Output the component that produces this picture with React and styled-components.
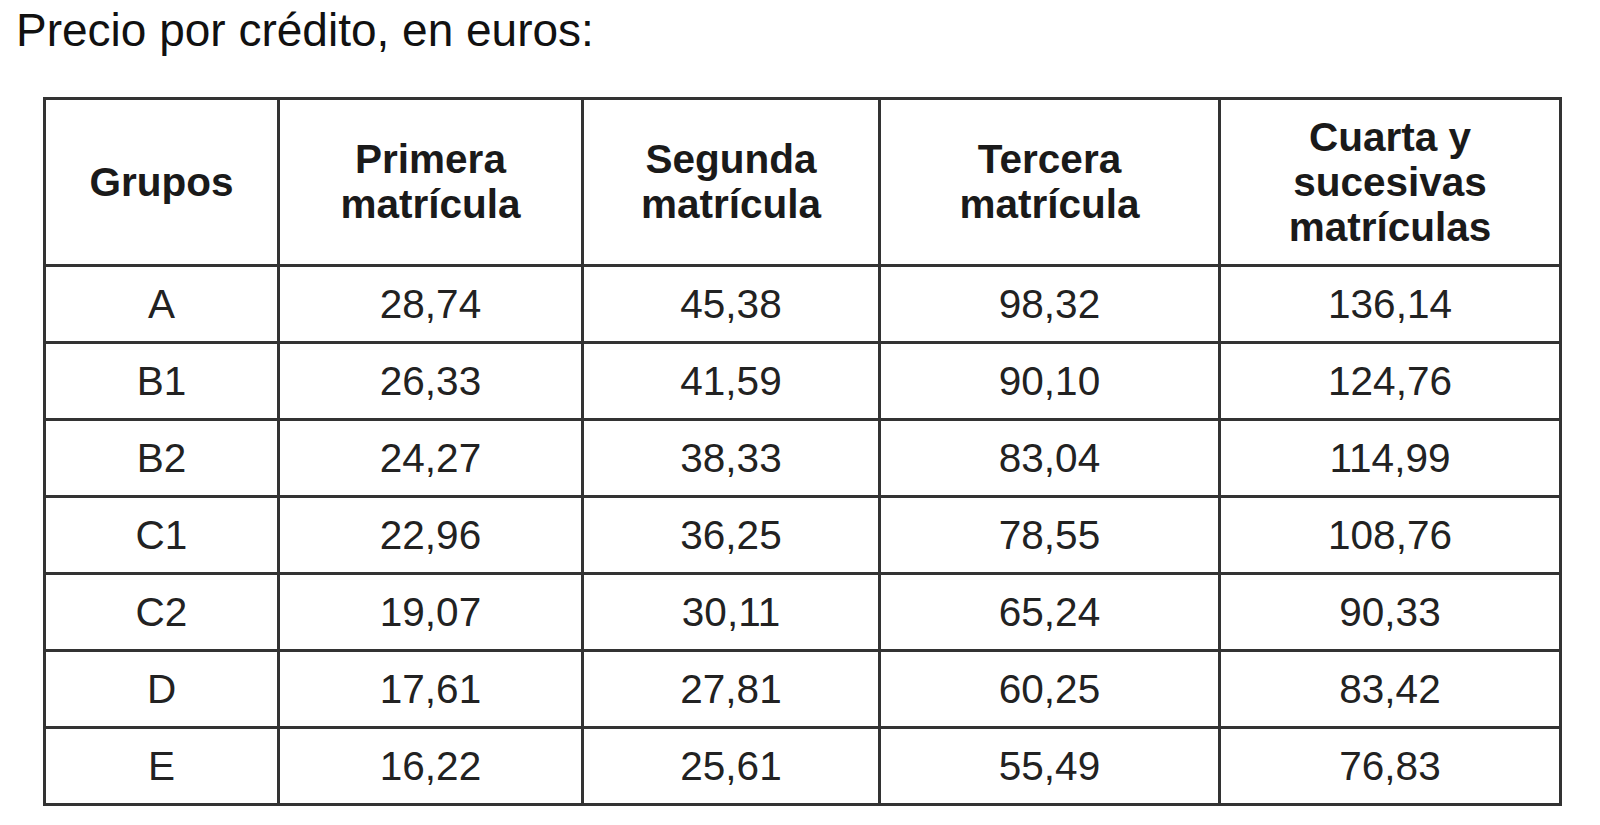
import React from "react";
import styled, { createGlobalStyle } from "styled-components";

const headers = [
  "Grupos",
  "Primera matrícula",
  "Segunda matrícula",
  "Tercera matrícula",
  "Cuarta y sucesivas matrículas",
];

const widths = [234, 304, 297, 340, 341];

const rows = [
  ["A", "28,74", "45,38", "98,32", "136,14"],
  ["B1", "26,33", "41,59", "90,10", "124,76"],
  ["B2", "24,27", "38,33", "83,04", "114,99"],
  ["C1", "22,96", "36,25", "78,55", "108,76"],
  ["C2", "19,07", "30,11", "65,24", "90,33"],
  ["D", "17,61", "27,81", "60,25", "83,42"],
  ["E", "16,22", "25,61", "55,49", "76,83"],
];

const App = () => {
  return (
    <>
      <GlobalStyle />
      <Page>
        <Title>Precio por crédito, en euros:</Title>
        <PriceTable>
          <colgroup>
            {widths.map((w, i) => (
              <col key={i} style={{ width: w }} />
            ))}
          </colgroup>
          <thead>
            <tr>
              {headers.map((h) => (
                <HeadCell key={h} $narrow={h.startsWith("Cuarta")}>
                  {h}
                </HeadCell>
              ))}
            </tr>
          </thead>
          <tbody>
            {rows.map((row) => (
              <Row key={row[0]}>
                {row.map((v, i) => (
                  <Cell key={i}>{v}</Cell>
                ))}
              </Row>
            ))}
          </tbody>
        </PriceTable>
      </Page>
    </>
  );
};

export default App;

const GlobalStyle = createGlobalStyle`
  body {
    margin: 0;
    background: #ffffff;
    font-family: "Liberation Sans", Arial, sans-serif;
  }
`;

const Page = styled.div`
  width: 1600px;
  height: 825px;
  padding: 4px 0 0 16px;
  box-sizing: border-box;
  background: #ffffff;
`;

const Title = styled.div`
  font-size: 46px;
  line-height: 52px;
  color: #111111;
  margin-bottom: 41px;
`;

const PriceTable = styled.table`
  margin-left: 27px;
  width: 1516px;
  table-layout: fixed;
  border-collapse: collapse;
  border: 3px solid #333333;
`;

const HeadCell = styled.th`
  height: 164px;
  padding: 0 ${(p) => (p.$narrow ? "30px" : "14px")};
  border: 3px solid #333333;
  font-size: 40.5px;
  line-height: 45px;
  font-weight: 700;
  color: #1a1a1a;
  text-align: center;
  vertical-align: middle;
`;

const Row = styled.tr`
  height: 77px;
`;

const Cell = styled.td`
  padding: 0;
  border: 3px solid #333333;
  font-size: 40.5px;
  color: #222222;
  text-align: center;
  vertical-align: middle;
`;
